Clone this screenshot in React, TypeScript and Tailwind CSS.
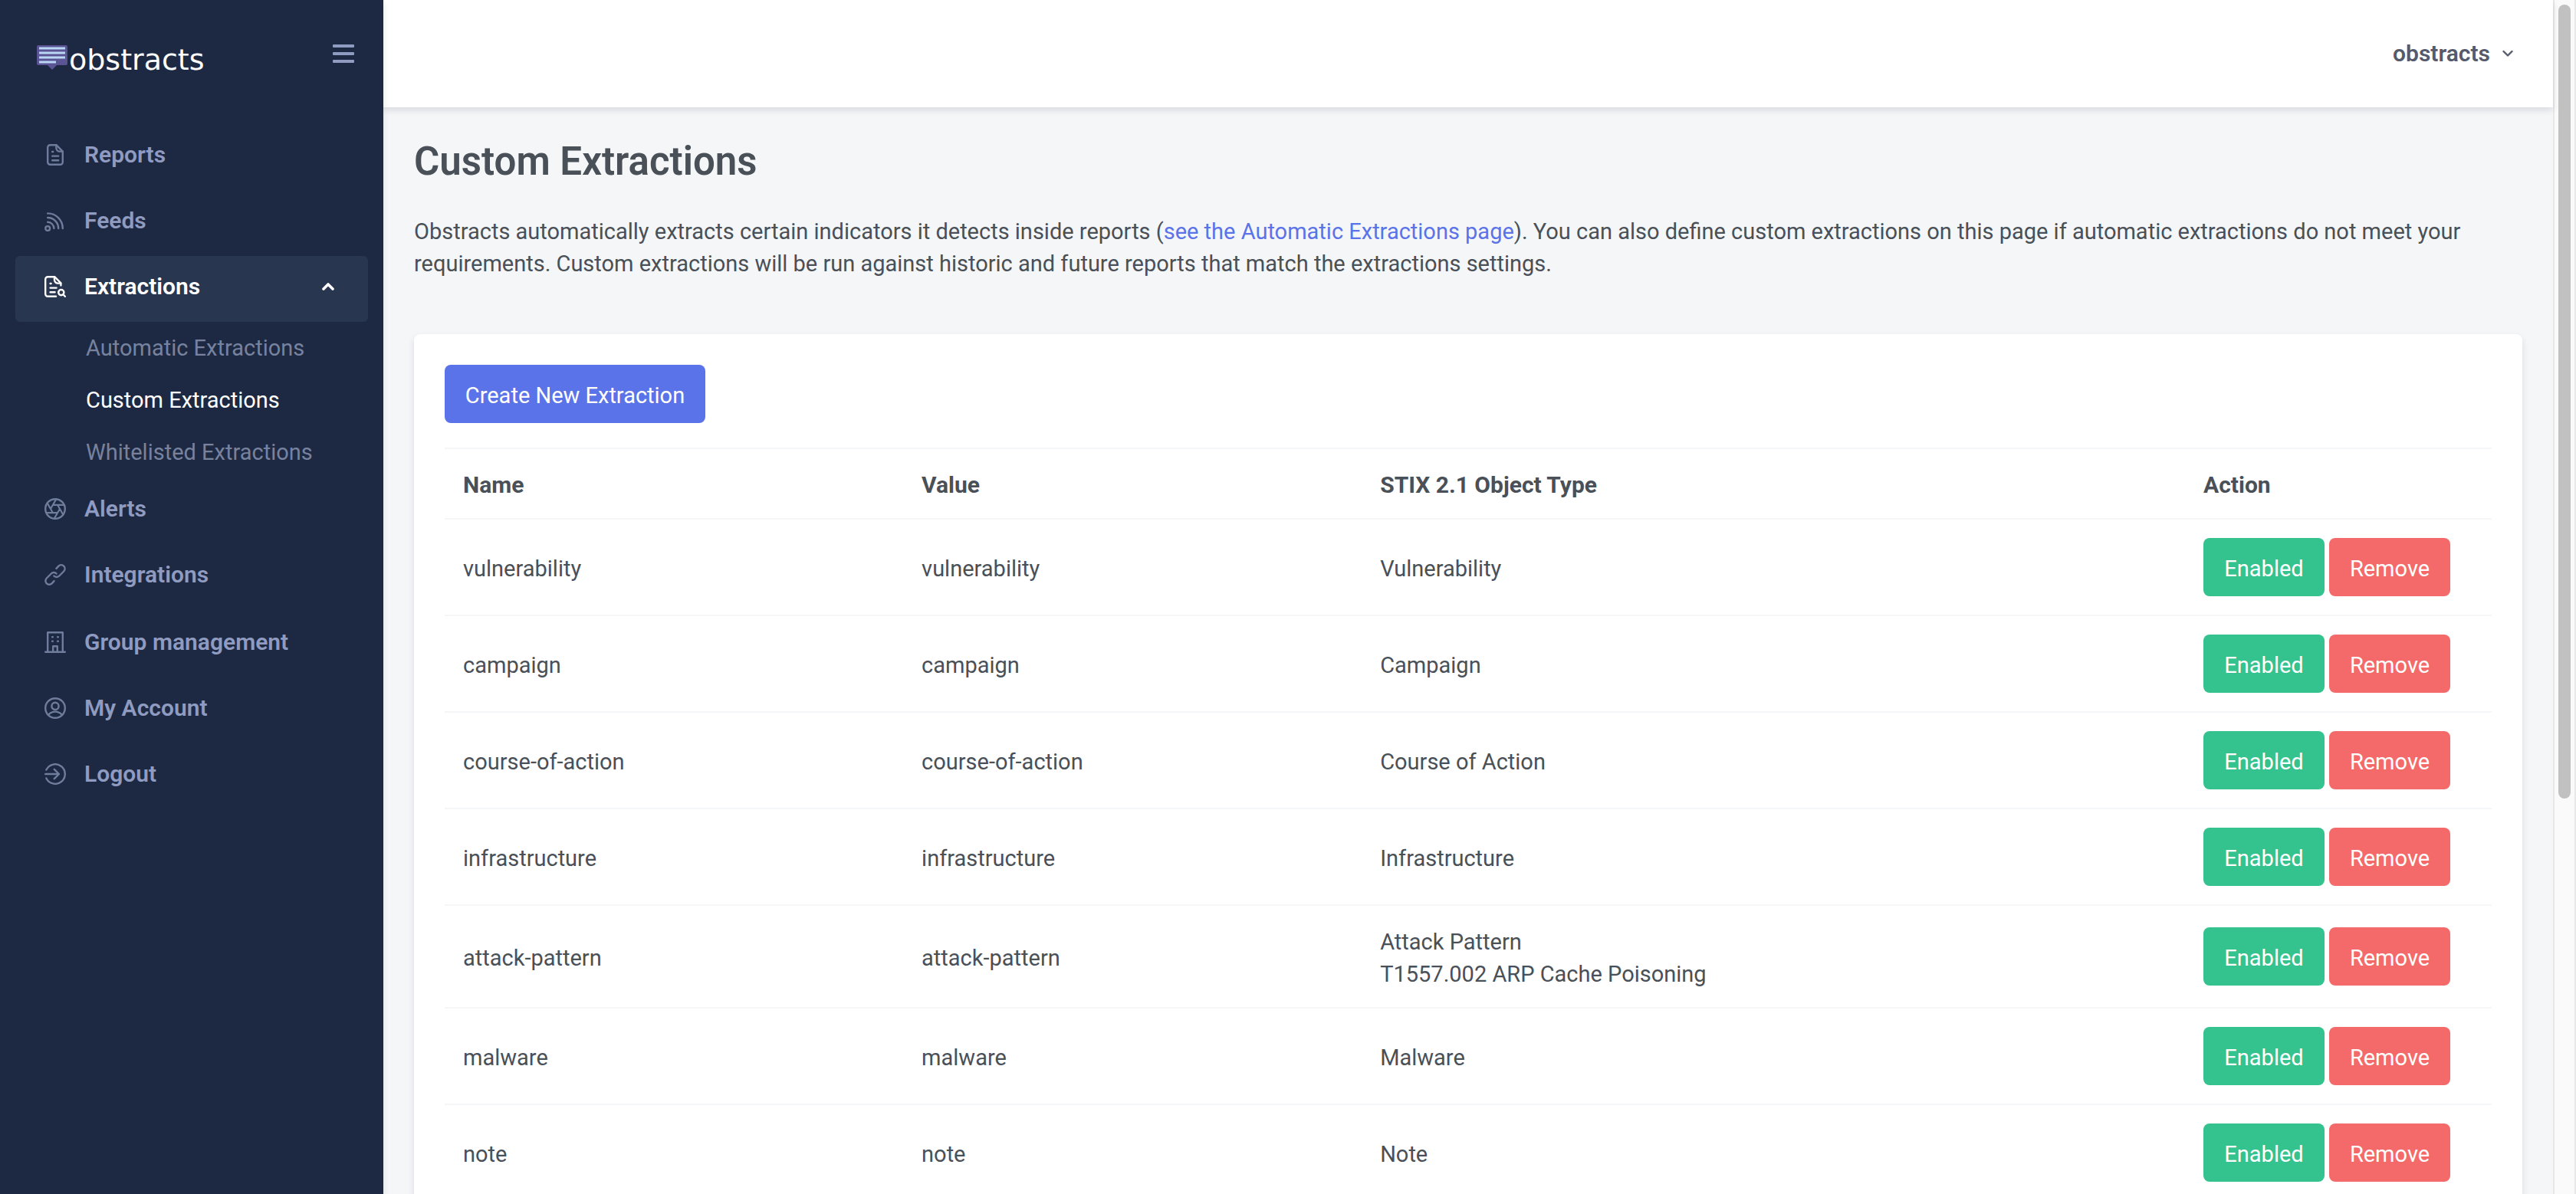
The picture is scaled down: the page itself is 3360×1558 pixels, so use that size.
import type { ReactNode } from 'react';

type Extraction = { name: string; value: string; type: string[] };

const extractions: Extraction[] = [
  { name: 'vulnerability', value: 'vulnerability', type: ['Vulnerability'] },
  { name: 'campaign', value: 'campaign', type: ['Campaign'] },
  { name: 'course-of-action', value: 'course-of-action', type: ['Course of Action'] },
  { name: 'infrastructure', value: 'infrastructure', type: ['Infrastructure'] },
  { name: 'attack-pattern', value: 'attack-pattern', type: ['Attack Pattern', 'T1557.002 ARP Cache Poisoning'] },
  { name: 'malware', value: 'malware', type: ['Malware'] },
  { name: 'note', value: 'note', type: ['Note'] },
];

function Icon({ children }: { children: ReactNode }) {
  return (
    <svg
      viewBox="0 0 28 28"
      className="size-7 shrink-0"
      fill="none"
      stroke="currentColor"
      strokeWidth="2.4"
      strokeLinecap="round"
      strokeLinejoin="round"
      aria-hidden="true"
    >
      {children}
    </svg>
  );
}

const ReportsIcon = () => (
  <Icon>
    <path d="M15.4 1.2H7.4A3.2 3.2 0 0 0 4.2 4.4v19.2a3.2 3.2 0 0 0 3.2 3.2h13.2a3.2 3.2 0 0 0 3.2-3.2V9.6z" />
    <path d="M15.4 1.4v3.8a4.4 4.4 0 0 0 4.4 4.4h3.8M10.2 10h1M10.2 15.6h8M10.2 21.2h8" />
  </Icon>
);

const FeedsIcon = () => (
  <Icon>
    <circle cx="4.2" cy="24" r="2.9" />
    <path d="M4.2 4.4A19.6 19.6 0 0 1 23.8 24M4.2 10A14 14 0 0 1 18.2 24M4.2 15.8A8.4 8.4 0 0 1 12.4 24" />
  </Icon>
);

const ExtractionsIcon = () => (
  <Icon>
    <path d="M15 26.8H4.4a3.2 3.2 0 0 1-3.2-3.2V4.4a3.2 3.2 0 0 1 3.2-3.2h8.8l8.2 8.2v3" />
    <path d="M13 1.4v3.8a4.4 4.4 0 0 0 4.4 4.4h3.8M7.6 10h1M7.6 15.6h8M7.6 21.2h6" />
    <circle cx="21.8" cy="21.6" r="3.6" />
    <path d="M24.5 24.3l2.3 2.5" />
  </Icon>
);

const AlertsIcon = () => (
  <Icon>
    <circle cx="14" cy="14" r="12.8" />
    <path d="M17 8.8l7.3 12.7M11 8.8h14.6M8 14l7.3-12.7M11 19.2L3.7 6.5M17 19.2H2.4M20 14l-7.3 12.7" strokeWidth="2.2" />
  </Icon>
);

const IntegrationsIcon = () => (
  <Icon>
    <path d="M15.4 5.8l3-3.1a4.7 4.7 0 0 1 6.8 6.8l-6 6a4.7 4.7 0 0 1-6.8 0" />
    <path d="M12.6 22.2l-3 3.1a4.7 4.7 0 0 1-6.8-6.8l6-6a4.7 4.7 0 0 1 6.8 0" />
  </Icon>
);

const GroupIcon = () => (
  <Icon>
    <path d="M1.2 26.8h25.6M4.2 26.8V1.2h19.6v25.6M11.2 26.6v-7.4h5.6v7.4M10.2 7.2h.6M17.2 7.2h.6M10.2 12.8h.6M17.2 12.8h.6" />
  </Icon>
);

const AccountIcon = () => (
  <Icon>
    <circle cx="14" cy="14" r="12.8" />
    <circle cx="14" cy="11.4" r="4.6" />
    <path d="M5.2 22.8a11.4 11.4 0 0 1 17.6 0" />
  </Icon>
);

const LogoutIcon = () => (
  <Icon>
    <path d="M2.4 8.6a12.8 12.8 0 1 1 0 10.8M1.2 14h17.4M12.8 7.8l6.2 6.2-6.2 6.2" />
  </Icon>
);

function NavItem({ icon, label, className = '' }: { icon: ReactNode; label: string; className?: string }) {
  return (
    <li className={className}>
      <a href="#" className="mx-5 flex items-center gap-6 pt-5 pr-11 pb-[26px] pl-[38px]">
        <span className="text-[#6f7c9c]">{icon}</span>
        <span>{label}</span>
      </a>
    </li>
  );
}

function Sidebar() {
  return (
    <aside className="z-20 w-[500px] shrink-0 bg-[#1d2942] shadow-[0_4px_8px_rgba(15,34,58,0.12)]">
      <div className="flex h-[140px] items-center justify-between pr-[38px] pl-12">
        <a href="#" className="flex items-start gap-0.5 pt-4 text-[38px] leading-[38px] text-white font-['DejaVu_Sans',sans-serif]">
          <svg viewBox="0 0 40 32" className="h-8 w-10" aria-hidden="true">
            <path d="M2 0h36a2 2 0 0 1 2 2v22a2 2 0 0 1-2 2H26l-6 6-6-6H2a2 2 0 0 1-2-2V2a2 2 0 0 1 2-2z" fill="#5a5394" />
            <path d="M3 4h34M3 10h34M3 16h34M3 22h22" stroke="#b9d6f3" strokeWidth="3" />
          </svg>
          obstracts
        </a>
        <button type="button" aria-label="Toggle menu" className="flex w-7 flex-col gap-1.5">
          <span className="h-1 rounded-[1px] bg-[#8f9bc0]" />
          <span className="h-1 rounded-[1px] bg-[#8f9bc0]" />
          <span className="h-1 rounded-[1px] bg-[#8f9bc0]" />
        </button>
      </div>
      <nav className="pt-[22px]">
        <ul className="text-[30px] leading-10 font-semibold text-[#8f9bc0]">
          <NavItem icon={<ReportsIcon />} label="Reports" />
          <NavItem icon={<FeedsIcon />} label="Feeds" />
          <li>
            <a
              href="#"
              aria-expanded="true"
              className="mx-5 flex items-center gap-6 rounded-md bg-[#283650] pt-5 pr-11 pb-[26px] pl-[38px] text-white"
            >
              <ExtractionsIcon />
              <span className="grow">Extractions</span>
              <svg viewBox="0 0 16 10" className="h-2.5 w-4" fill="none" stroke="currentColor" strokeWidth="3.6" strokeLinecap="round" strokeLinejoin="round" aria-hidden="true">
                <path d="M2 8l6-6 6 6" />
              </svg>
            </a>
            <ul className="pl-28 text-[29px] leading-[68px] font-normal text-[#77829f]">
              <li><a href="#">Automatic Extractions</a></li>
              <li><a href="#" aria-current="page" className="text-white">Custom Extractions</a></li>
              <li><a href="#">Whitelisted Extractions</a></li>
            </ul>
          </li>
          <NavItem icon={<AlertsIcon />} label="Alerts" />
          <NavItem icon={<IntegrationsIcon />} label="Integrations" />
          <NavItem icon={<GroupIcon />} label="Group management" className="mt-0.5" />
          <NavItem icon={<AccountIcon />} label="My Account" />
          <NavItem icon={<LogoutIcon />} label="Logout" />
        </ul>
      </nav>
    </aside>
  );
}

function ExtractionsTable() {
  return (
    <table className="mt-8 w-full table-fixed text-left">
      <colgroup>
        <col className="w-[22.4%]" />
        <col className="w-[22.4%]" />
        <col />
        <col className="w-[400px]" />
      </colgroup>
      <thead>
        <tr className="border-t-2 border-[#f5f6f8] text-[30px] leading-[42px]">
          <th className="px-6 pt-[26px] pb-[22px] font-bold">Name</th>
          <th className="px-6 pt-[26px] pb-[22px] font-bold">Value</th>
          <th className="px-6 pt-[26px] pb-[22px] font-bold">STIX 2.1 Object Type</th>
          <th className="px-6 pt-[26px] pb-[22px] font-bold">Action</th>
        </tr>
      </thead>
      <tbody>
        {extractions.map((row) => (
          <tr key={row.name} className="border-t-2 border-[#f5f6f8]">
            <td className="px-6 pt-[26px] pb-[22px]">{row.name}</td>
            <td className="px-6 pt-[26px] pb-[22px]">{row.value}</td>
            <td className="px-6 pt-[26px] pb-[22px]">
              {row.type.map((line) => (
                <div key={line}>{line}</div>
              ))}
            </td>
            <td className="p-6">
              <div className="flex gap-1.5">
                <button type="button" className="h-[76px] w-[158px] rounded-lg bg-[#34c38f] pt-1 text-white">Enabled</button>
                <button type="button" className="h-[76px] w-[158px] rounded-lg bg-[#f46a6a] pt-1 text-white">Remove</button>
              </div>
            </td>
          </tr>
        ))}
      </tbody>
    </table>
  );
}

export default function App() {
  return (
    <div className="flex h-screen overflow-hidden bg-[#f5f6f8] font-['Roboto',sans-serif] text-[29px] leading-[42px] text-[#495057]">
      <Sidebar />
      <div className="flex min-w-0 grow flex-col">
        <header className="z-10 flex h-[140px] shrink-0 items-center justify-end bg-white pr-[52px] shadow-[0_4px_8px_rgba(15,34,58,0.12)]">
          <button type="button" className="flex items-center gap-4 text-[30px] font-semibold text-[#555b6d]">
            obstracts
            <svg viewBox="0 0 14 10" className="h-2.5 w-3.5" fill="none" stroke="currentColor" strokeWidth="2.4" strokeLinecap="round" strokeLinejoin="round" aria-hidden="true">
              <path d="M1.5 2L7 7.5 12.5 2" />
            </svg>
          </button>
        </header>
        <main className="min-h-0 grow overflow-hidden px-10 pt-[41px]">
          <h1 className="text-[51px] leading-[60px] font-semibold">Custom Extractions</h1>
          <p className="mt-10">
            Obstracts automatically extracts certain indicators it detects inside reports (
            <a href="#" className="text-[#5b73e8]">see the Automatic Extractions page</a>
            ). You can also define custom extractions on this page if automatic extractions do not meet your requirements.
            Custom extractions will be run against historic and future reports that match the extractions settings.
          </p>
          <section className="mt-[71px] rounded-lg bg-white p-10 shadow-[0_4px_8px_rgba(15,34,58,0.12)]">
            <button type="button" className="block h-[76px] w-[340px] rounded-lg bg-[#5b73e8] pt-1 text-white">
              Create New Extraction
            </button>
            <ExtractionsTable />
          </section>
        </main>
      </div>
      <div aria-hidden="true" className="w-[30px] shrink-0 border-x-2 border-[#e8e8e8] bg-[#fafafa] px-1 py-1.5">
        <div className="mx-auto h-[67%] w-4 rounded-full bg-[#c1c1c1]" />
      </div>
    </div>
  );
}
